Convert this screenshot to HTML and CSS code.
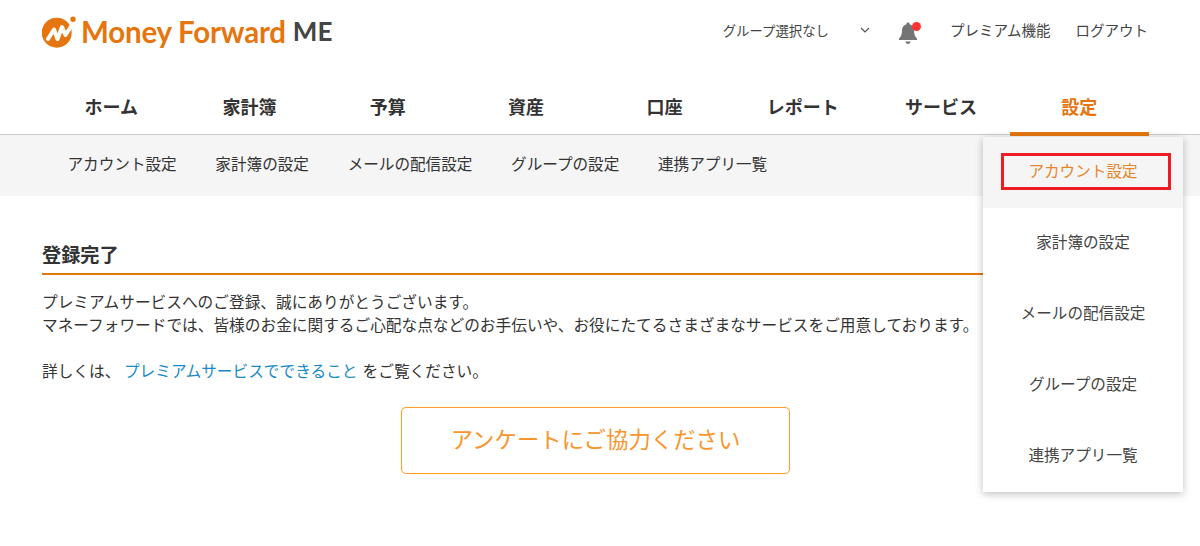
FILE: index.html
```html
<!DOCTYPE html>
<html lang="ja">
<head>
    <meta charset="UTF-8">
    <title>登録完了</title>
    <link rel="stylesheet" href="styles.css">
</head>
<body>
    <header class="top-bar">
        <a class="logo">
            <svg class="logo-mark" width="34" height="34" viewBox="0 0 34 34">
                <circle cx="14.700" cy="18.700" r="15" fill="#e5760f"/>
                <polyline points="6,25 12,15.500 15.500,25 20,13 23.500,21 30,11" fill="none" stroke="#fff" stroke-width="4" stroke-linejoin="round" stroke-linecap="round"/>
                <circle cx="31" cy="5.300" r="2.700" fill="#e5760f"/>
            </svg>
            <span class="logo-name">Money Forward</span>
            <span class="logo-me">ME</span>
        </a>
        <div class="top-links">
            <span class="group-select">グループ選択なし</span>
            <svg class="chevron" width="10" height="6" viewBox="0 0 10 6"><path d="M1 1l4 4 4-4" fill="none" stroke="#555" stroke-width="1.200"/></svg>
            <span class="bell">
                <svg width="20" height="24" viewBox="0 0 20 24">
                    <path d="M10 1.500c-1 0-1.600.7-1.600 1.700C5.500 4 4 6.500 4 9.500c0 4-1 6-3 8v1.500h18v-1.500c-2-2-3-4-3-8 0-3-1.500-5.500-4.400-6.300 0-1-.6-1.700-1.600-1.700z" fill="#757575"/>
                    <path d="M7.500 20.500h5c0 1.500-1 2.500-2.500 2.500s-2.500-1-2.500-2.500z" fill="#757575"/>
                </svg>
                <i class="bell-dot"></i>
            </span>
            <a class="top-link">プレミアム機能</a>
            <a class="top-link">ログアウト</a>
        </div>
    </header>

    <nav class="main-nav">
        <a>ホーム</a>
        <a>家計簿</a>
        <a>予算</a>
        <a>資産</a>
        <a>口座</a>
        <a>レポート</a>
        <a>サービス</a>
        <a class="active">設定</a>
    </nav>

    <div class="sub-nav">
        <a>アカウント設定</a>
        <a>家計簿の設定</a>
        <a>メールの配信設定</a>
        <a>グループの設定</a>
        <a>連携アプリ一覧</a>
    </div>

    <main class="content">
        <h2 class="section-title">登録完了</h2>
        <p>プレミアムサービスへのご登録、誠にありがとうございます。<br>マネーフォワードでは、皆様のお金に関するご心配な点などのお手伝いや、お役にたてるさまざまなサービスをご用意しております。</p>
        <p class="details">詳しくは、 <a class="text-link">プレミアムサービスでできること</a> をご覧ください。</p>
        <div class="survey-wrap">
            <a class="survey-btn">アンケートにご協力ください</a>
        </div>
    </main>

    <!-- dropdown from the settings tab -->
    <ul class="dropdown">
        <li class="current">アカウント設定<span class="highlight"></span></li>
        <li>家計簿の設定</li>
        <li>メールの配信設定</li>
        <li>グループの設定</li>
        <li>連携アプリ一覧</li>
    </ul>
</body>
</html>
```

FILE: styles.css
```css
* {
    box-sizing: border-box;
}

html, body {
    margin: 0;
    height: 546px;
    overflow: hidden;
}

body {
    position: relative;
    background-color: #fff;
    color: #333;
    font-family: "Noto Sans CJK JP", "Noto Sans", sans-serif;
    font-size: 15.680px;
}

/* Top bar */
.top-bar {
    display: flex;
    align-items: center;
    justify-content: space-between;
    height: 62px;
    padding: 0 52px 0 42px;
}

.logo {
    display: flex;
    align-items: center;
    font-family: Lato, "Liberation Sans", sans-serif;
    font-weight: 700;
    font-size: 29.500px;
}

.logo-mark {
    margin-right: 5px;
}

.logo-name {
    color: #e5760f;
    letter-spacing: -0.2px;
}

.logo-me {
    margin-left: 7px;
    font-size: 26px;
    color: #444;
}

.top-links {
    display: flex;
    align-items: center;
    padding-bottom: 3px;
    font-size: 14.500px;
    color: #444;
}

.group-select {
    font-size: 13.400px;
}

.chevron {
    margin-left: 31px;
}

.bell {
    position: relative;
    display: flex;
    margin-left: 28px;
    padding-top: 6px;
}

.bell-dot {
    position: absolute;
    top: 7px;
    right: -3px;
    width: 9px;
    height: 9px;
    border-radius: 50%;
    background-color: #f33;
}

.top-link {
    margin-left: 25px;
}

.top-link:first-of-type {
    margin-left: 32px;
}

/* Main nav */
.main-nav {
    display: grid;
    grid-template-columns: repeat(8, 1fr);
    height: 73px;
    padding: 0 51.500px 0 42px;
    border-bottom: 1px solid #ccc;
}

.main-nav a {
    height: 74px;
    padding-top: 31px;
    text-align: center;
    font-size: 18px;
    font-weight: 700;
    line-height: 27px;
    color: #333;
}

.main-nav .active {
    color: #e5760f;
    border-bottom: 4px solid #e5760f;
}

/* Sub nav */
.sub-nav {
    display: flex;
    align-items: center;
    gap: 38.700px;
    height: 61px;
    padding: 0 67.500px 5px;
    background-color: #f5f5f5;
    font-size: 15.600px;
}

/* Content */
.content {
    padding: 44px 42px 0;
}

.section-title {
    margin: 0 0 15px;
    height: 35px;
    border-bottom: 2px solid #e5760f;
    font-size: 19.200px;
    line-height: 29px;
}

.content p {
    margin: 0;
    line-height: 23px;
}

.content .details {
    margin-top: 23px;
}

.text-link {
    margin-right: 1.500px;
    color: #1a8ac4;
}

.survey-wrap {
    display: flex;
    justify-content: center;
    margin-top: 25px;
    padding-right: 9px;
}

.survey-btn {
    display: flex;
    align-items: center;
    justify-content: center;
    width: 389px;
    height: 67px;
    padding-bottom: 6px;
    border: 1px solid #ff9d2e;
    border-radius: 5px;
    box-shadow: 0 0 1px rgba(255, 157, 46, 0.6);
    font-size: 22.400px;
    color: #f7962e;
}

/* Dropdown */
.dropdown {
    position: absolute;
    top: 137px;
    left: 983px;
    width: 200px;
    margin: 0;
    padding: 0;
    list-style: none;
    background-color: #fff;
    box-shadow: 0 2px 8px rgba(0, 0, 0, 0.25);
    font-size: 15.600px;
}

.dropdown li {
    position: relative;
    display: flex;
    align-items: center;
    justify-content: center;
    height: 71px;
    padding-bottom: 5px;
    color: #444;
}

.dropdown .current {
    background-color: #f5f5f5;
    color: #e8852a;
}

/* red box drawn over the first item */
.highlight {
    position: absolute;
    top: 16px;
    left: 18px;
    width: 170px;
    height: 37px;
    border: 3px solid #ed1c24;
}
```
